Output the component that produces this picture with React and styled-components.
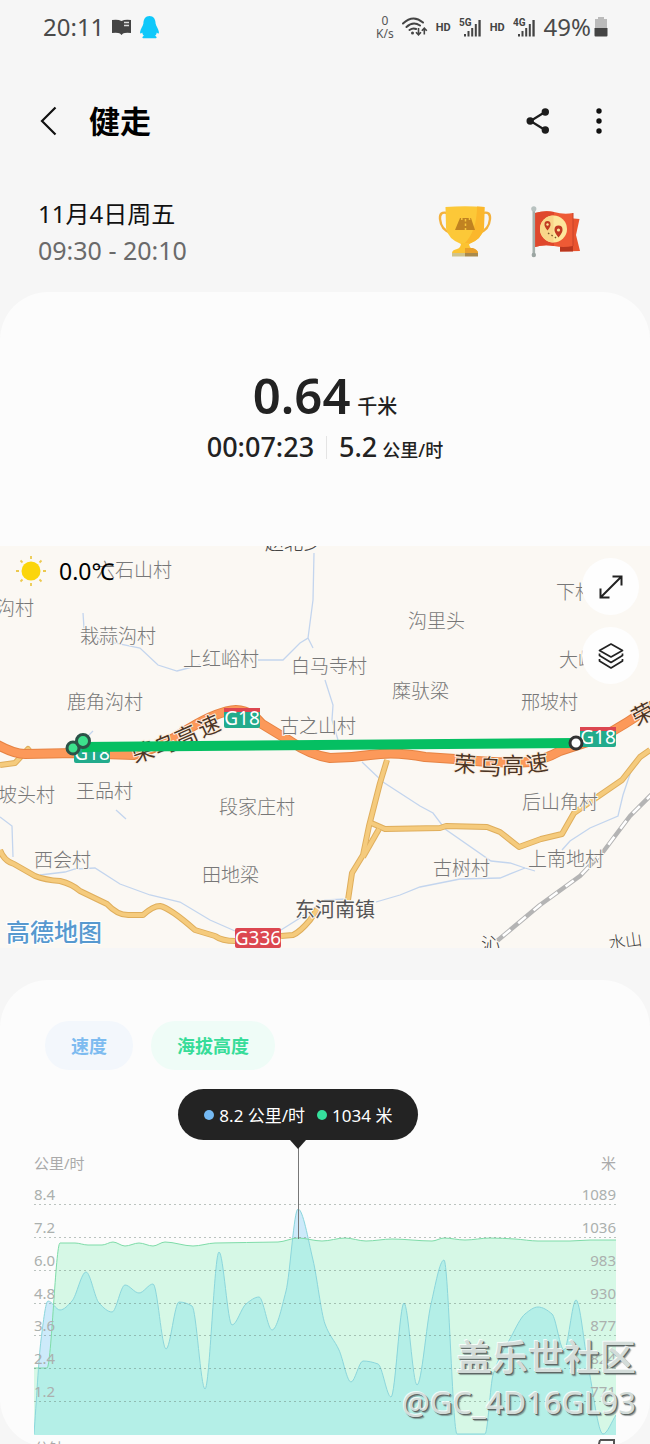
import React from "react";
import styled, { createGlobalStyle } from "styled-components";

const GlobalStyle = createGlobalStyle`
  * {
    box-sizing: border-box;
  }

  body {
    margin: 0;
    background: #f6f6f6;
    color: #222;
    font-family: "Noto Sans", "Noto Sans CJK SC", sans-serif;
  }

  button {
    padding: 0;
    border: none;
    background: none;
    color: inherit;
    font: inherit;
    cursor: pointer;
  }

  svg {
    display: block;
  }
`;

/* ---------- data ---------- */

const villages = [
  ["六石山村", 96, 577],
  ["沟村", -4, 615],
  ["栽蒜沟村", 80, 643],
  ["上红峪村", 183, 666],
  ["白马寺村", 291, 673],
  ["沟里头", 408, 628],
  ["下村", 556, 599],
  ["大峪", 559, 667],
  ["糜驮梁", 392, 698],
  ["邢坡村", 521, 709],
  ["鹿角沟村", 67, 709],
  ["古之山村", 280, 733],
  ["坡头村", -2, 802],
  ["王品村", 76, 798],
  ["段家庄村", 219, 814],
  ["后山角村", 522, 809],
  ["西会村", 34, 867],
  ["田地梁", 202, 882],
  ["古树村", 433, 875],
  ["上南地村", 528, 866],
];

const roadNames = [
  ["荣", 143, 752, -18],
  ["乌", 165, 745, -22],
  ["高", 186, 736, -24],
  ["速", 209, 726, -24],
  ["荣", 465, 764, 4],
  ["乌", 490, 767, 2],
  ["高", 513, 765, 0],
  ["速", 537, 763, -8],
  ["荣", 643, 714, -28],
];

const rivers = [
  "M314 553 313 600 308 638 300 643 283 660 258 660",
  "M308 638 313 648M325 680 333 705 332 720 338 740",
  "M83 613 84 628 100 640 140 648 158 665 177 671 200 665",
  "M0 817 12 826 13 857M40 875 65 872 75 869 95 868 120 884 150 895 180 902 210 920 235 931",
  "M116 810 126 819M84 740 93 731",
  "M362 762 383 782 420 806 433 813 445 829 491 861 510 863 525 868 535 871",
  "M376 902 400 895 420 887 460 879 500 878 525 868",
  "M281 930 300 918 325 900 348 899",
  "M562 850 570 841 590 828 618 816 623 795 632 768 645 755",
];

const yellowRoads = [
  "M0 850Q4 861 14 864L35 876Q45 880 60 881Q72 884 80 891L107 904Q118 916 130 915L143 915Q153 906 160 906Q170 908 195 930L215 936Q222 941 235 941",
  "M281 936 293 935Q300 932 310 920L318 908",
  "M387 760 380 783 369 826 363 855 352 873 348 900",
  "M369 822 385 829 440 828 446 826 487 827 500 832 519 847 541 839 562 834 574 813 590 802 622 780 640 757 650 750",
  "M379 829 363 857",
  "M0 765 15 763 28 749 32 754",
];

const highway =
  "M-4 744Q14 754 25 754L75 753 134 755Q160 748 190 728Q218 711 236 710Q250 710 262 724L290 741Q310 755 330 758Q350 758 370 755Q395 751 425 757L455 759Q500 764 530 762Q548 758 560 751L600 738Q630 722 654 704";

const railway = "M654 792 630 816 603 852 580 876 540 905 497 941";

const axis = [
  ["8.4", "1089"],
  ["7.2", "1036"],
  ["6.0", "983"],
  ["4.8", "930"],
  ["3.6", "877"],
  ["2.4", "824"],
  ["1.2", "771"],
];

const speed = [
  [34, 1434], [41, 1340], [48, 1301], [60, 1310], [72, 1301], [86, 1272],
  [99, 1303], [112, 1312], [125, 1285], [139, 1293], [153, 1284], [166, 1349],
  [179, 1302], [192, 1306], [205, 1389], [219, 1252], [232, 1325], [246, 1304],
  [259, 1297], [272, 1330], [286, 1291], [298, 1209], [313, 1260], [325, 1324],
  [339, 1350], [351, 1382], [363, 1361], [378, 1364], [391, 1397], [404, 1303],
  [417, 1385], [431, 1304], [444, 1260], [457, 1434], [485, 1434], [493, 1375],
  [511, 1337], [525, 1314], [538, 1307], [552, 1314], [564, 1350], [576, 1300],
  [588, 1365], [603, 1434], [616, 1415],
];

const altitude = [
  [34, 1368], [47, 1368], [60, 1243], [75, 1243], [88, 1245], [102, 1245],
  [113, 1242], [125, 1246], [139, 1243], [153, 1246], [165, 1242], [193, 1246],
  [215, 1243], [278, 1242], [298, 1238], [322, 1241], [345, 1238], [366, 1241],
  [392, 1239], [432, 1241], [444, 1238], [465, 1240], [490, 1238], [515, 1239],
  [538, 1241], [570, 1241], [590, 1240], [616, 1240],
];

// monotone cubic through the samples, so peaks never overshoot
const curve = (samples) => {
  const pts = samples.map(([x, y]) => [x - 34, y - 1172]);
  const slope = (a, b) => (b[1] - a[1]) / (b[0] - a[0]);
  const tangents = pts.map((p, i) => {
    if (i === 0) return slope(p, pts[1]);
    if (i === pts.length - 1) return slope(pts[i - 1], p);
    const l = slope(pts[i - 1], p);
    const r = slope(p, pts[i + 1]);
    return l * r <= 0 ? 0 : (2 * l * r) / (l + r);
  });
  return pts.reduce((d, [x, y], i) => {
    if (i === 0) return `M${x} ${y}`;
    const [px, py] = pts[i - 1];
    const h = (x - px) / 3;
    return `${d}C${px + h} ${py + tangents[i - 1] * h} ${x - h} ${
      y - tangents[i] * h
    } ${x} ${y}`;
  }, "");
};

const speedLine = curve(speed);
const altitudeLine = curve(altitude);

/* ---------- icons ---------- */

const BookIcon = () => (
  <svg width="19" height="16" viewBox="0 0 19 16">
    <path
      d="M0 1Q6 0 9.500 2Q13 0 19 1V14Q13 13.500 11 14.500L9.500 16L8 14.500Q6 13.500 0 14Z"
      fill="#444"
    />
    <path d="M12 3.500H17M12 6.500H17" stroke="#ddd" strokeWidth="1.300" />
  </svg>
);

const PenguinIcon = () => (
  <svg width="19" height="23" viewBox="0 0 19 23">
    <path
      d="M9.500 0C13.500 0 15.500 3 15.600 7.500C16 10 18.500 13 18.900 16C19 18 18 18 16.800 16.500C16.500 18 16 19 15 19.800C17 20.500 17 22 16 22.300H3C2 22 2 20.500 4 19.800C3 19 2.500 18 2.200 16.500C1 18 0 18 .1 16C.5 13 3 10 3.400 7.500C3.500 3 5.500 0 9.500 0Z"
      fill="#0fc8fa"
    />
  </svg>
);

const WifiIcon = () => (
  <svg width="26" height="20" viewBox="0 0 26 20" fill="none" stroke="#444">
    <path
      d="M1 6.500Q11 -3 21 5.500M4.500 10Q11 4 18 8.500M7.500 13Q11 10.500 14 12"
      strokeWidth="2"
      strokeLinecap="round"
    />
    <circle cx="10.500" cy="16" r="1.500" fill="#444" stroke="none" />
    <path
      d="M16.500 11V17.500M14 15.300L16.500 17.800L19 15.300M22.300 17.500V11.500M19.800 13.700L22.300 11.200L24.800 13.700"
      strokeWidth="1.600"
    />
  </svg>
);

const SignalIcon = ({ label }) => (
  <svg width="23" height="21" viewBox="0 0 23 21" fill="#444">
    <text x="0" y="9" fontFamily="Roboto" fontSize="10" fontWeight="700">
      {label}
    </text>
    <path d="M5 17h2v2.500h-2zM8.500 14h2v5.500h-2zM12.200 11h2v8.500h-2zM15.800 7h2v12.500h-2zM19.400 3h2.300v16.500h-2.300z" />
  </svg>
);

const BatteryIcon = () => (
  <svg width="14" height="20" viewBox="0 0 14 20">
    <path d="M4 0h6v2h3v10H1V2h3z" fill="#bbb" />
    <path d="M.5 11h13v7.500q0 1-1 1h-11q-1 0-1-1z" fill="#444" />
  </svg>
);

const BackIcon = () => (
  <svg width="17" height="30" viewBox="0 0 17 30" fill="none" stroke="#111">
    <path d="M15.500 1.500L2 15L15.500 28.500" strokeWidth="2.200" />
  </svg>
);

const ShareIcon = () => (
  <svg width="24" height="28" viewBox="0 0 24 28" fill="#1c1c1c">
    <path d="M19 5L4.500 14L19 23" fill="none" stroke="#1c1c1c" strokeWidth="2.200" />
    <circle cx="19.300" cy="5" r="3.700" />
    <circle cx="4.200" cy="14" r="3.700" />
    <circle cx="19.300" cy="23" r="3.700" />
  </svg>
);

const MoreIcon = () => (
  <svg width="8" height="28" viewBox="0 0 8 28" fill="#111">
    <circle cx="4" cy="4" r="2.700" />
    <circle cx="4" cy="14" r="2.700" />
    <circle cx="4" cy="24" r="2.700" />
  </svg>
);

const TrophyIcon = () => (
  <svg width="54" height="52" viewBox="0 0 54 52">
    <g fill="none" stroke="#f3b13c" strokeWidth="2.400">
      <path d="M9 7Q1.500 5 2 13Q3 24 13 27" />
      <path d="M45 7Q52.500 5 52 13Q51 24 41 27" />
    </g>
    <path d="M7.500 1Q27 -.5 46.500 1L46 22Q44 33 31 38H23Q10 33 8 22Z" fill="#fcc838" />
    <path d="M46.500 1L46 22Q44 33 31 38H26Q39 25 39 .4Z" fill="#fbb72c" />
    <path d="M23 37H31Q31 42 35 43Q40 44 40 47H14Q14 44 19 43Q23 42 23 37Z" fill="#fcc331" />
    <path d="M27 42H35Q40 44 40 47H27Z" fill="#e9a02a" />
    <path d="M14 47H27V50.500H14Z" fill="#cfc38b" />
    <path d="M27 47H40V50.500H27Z" fill="#a98a4c" />
    <path d="M22 12H33L37 24H17Z" fill="#c08221" />
    <path
      d="M27.500 13V15.500M27.500 17.500V20M27.500 22V24M23.800 12V14M31.500 12V14"
      stroke="#f8c63a"
      strokeWidth="1.500"
    />
  </svg>
);

const FlagIcon = () => (
  <svg width="52" height="52" viewBox="0 0 52 52">
    <path d="M38 12L49.500 13L46 29L50 45L30 45.500Z" fill="#e9542f" />
    <path d="M30 40H43V45.500H30Z" fill="#b9371f" />
    <path d="M5 7Q15 4 24 6Q34 9 43 7V40Q33 42 24 40Q14 38 5 41Z" fill="#ee5a35" />
    <path d="M5 7Q15 4 24 6V40Q14 38 5 41Z" fill="#df472c" />
    <path d="M43 7V40" stroke="#c8432a" />
    <rect x="2.500" y="3" width="2.600" height="47" fill="#a5b0ac" />
    <circle cx="3.800" cy="2.800" r="2.600" fill="#b8c2c0" />
    <circle cx="3.800" cy="49" r="2.200" fill="#9ba5a2" />
    <circle cx="23.500" cy="23" r="13.500" fill="#fde79c" />
    <path d="M23.500 9.500A13.500 13.500 0 0 0 23.500 36.500Z" fill="#f9d68a" />
    <path
      d="M17.500 24.500Q14 20 14.500 18A3 3 0 0 1 20.500 18Q21 20 17.500 24.500ZM28.500 31.500Q24 26 24.500 23.500A4 4 0 0 1 32.500 23.500Q33 26 28.500 31.500Z"
      fill="#c13a22"
    />
    <circle cx="17.500" cy="18.500" r="1.200" fill="#fde79c" />
    <circle cx="28.500" cy="24" r="1.600" fill="#fde79c" />
    <path d="M18 27L27 32.500" stroke="#7a5a2c" strokeWidth="1.400" strokeDasharray="1.500 2.500" />
  </svg>
);

const SunIcon = () => (
  <svg width="30" height="30" viewBox="0 0 30 30">
    <circle cx="15" cy="15" r="9.500" fill="#fbd50b" />
    <path
      d="M15 0V3M15 27V30M0 15H3M27 15H30M4.500 4.500L6.500 6.500M23.500 23.500L25.500 25.500M4.500 25.500L6.500 23.500M23.500 6.500L25.500 4.500"
      stroke="#ecc94f"
      strokeWidth="1.800"
    />
  </svg>
);

const ExpandIcon = () => (
  <svg width="24" height="24" viewBox="0 0 24 24" fill="none" stroke="#222" strokeWidth="2">
    <path d="M2 22L22 2M13.500 1.500H22.500V10.500M1.500 13.500V22.500H10.500" />
  </svg>
);

const LayersIcon = () => (
  <svg width="26" height="26" viewBox="0 0 26 26" fill="none" stroke="#222" strokeWidth="1.700" strokeLinejoin="round">
    <path d="M13 1L24.500 7.500L13 14L1.500 7.500Z" />
    <path d="M1.500 10.500V12.500L13 19.500L24.500 12.500V10.500" />
    <path d="M1.500 16V18L13 25L24.500 18V16" />
  </svg>
);

/* ---------- map ---------- */

const Shield = ({ x, y, width = 36, red, children }) => (
  <g>
    <rect x={x} y={y} width={width} height="20" rx="2" fill={red ? "#dc4750" : "#22ab8c"} />
    {!red && <rect x={x} y={y} width={width} height="4" fill="#dc4750" />}
    <text
      x={x + width / 2}
      y={y + 17}
      fontSize="19"
      fill="#fff"
      textAnchor="middle"
    >
      {children}
    </text>
  </g>
);

const RouteMap = () => (
  <MapCanvas viewBox="0 546 650 402" preserveAspectRatio="xMidYMid slice" role="img" aria-label="路线地图">
    <rect y="546" width="650" height="402" fill="#fbf8f3" />
    <g fill="none" stroke="#c3d5ee" strokeWidth="1.300">
      {rivers.map((d) => (
        <path key={d} d={d} />
      ))}
    </g>
    <g fill="none" strokeLinejoin="round">
      <path d={railway} stroke="#b4b4b4" strokeWidth="4.500" />
      <path d={railway} stroke="#fff" strokeWidth="2.500" strokeDasharray="10 10" />
      {yellowRoads.map((d) => (
        <path key={d} d={d} stroke="#dfae5c" strokeWidth="6" />
      ))}
      {yellowRoads.map((d) => (
        <path key={d} d={d} stroke="#f5cb7d" strokeWidth="4" />
      ))}
      <path d={highway} stroke="#e68343" strokeWidth="10" />
      <path d={highway} stroke="#fc995a" strokeWidth="8" />
    </g>
    <g fontSize="19" fontWeight="300" fill="#777" stroke="#fbf8f3" strokeWidth="2" paintOrder="stroke">
      {villages.map(([name, x, y]) => (
        <text key={name} x={x} y={y}>
          {name}
        </text>
      ))}
      <text x="265" y="550" fill="#444">赵北乡</text>
      <text x="295" y="917" fontSize="20" fontWeight="400" fill="#555">东河南镇</text>
      <text x="481" y="952" fill="#333">沁</text>
      <text x="608" y="948" fontSize="17" fill="#444" transform="rotate(-8 620 940)">水山</text>
    </g>
    <g fontSize="22" fill="#4d3524" stroke="#fbeee0" strokeWidth="2" paintOrder="stroke" textAnchor="middle">
      {roadNames.map(([name, x, y, angle]) => (
        <text key={x} x={x} y={y + 8} transform={`rotate(${angle} ${x} ${y})`}>
          {name}
        </text>
      ))}
    </g>
    <Shield x={224} y={708}>G18</Shield>
    <Shield x={74} y={743}>G18</Shield>
    <Shield x={580} y={727}>G18</Shield>
    <Shield x={235} y={928} width={46} red>G336</Shield>
    <path d="M82 747L576 743" stroke="#05bf62" strokeWidth="10" />
    <g strokeWidth="3">
      <circle cx="73" cy="748" r="6" fill="#3de08c" stroke="#2c5247" />
      <circle cx="83" cy="741" r="6.500" fill="#3de08c" stroke="#2c5247" />
      <circle cx="576" cy="743" r="6" fill="#fff" stroke="#333" />
    </g>
    <text x="6" y="941" fontSize="24" fontWeight="500" fill="#5799cf" stroke="#fff" strokeWidth="2" paintOrder="stroke">
      高德地图
    </text>
  </MapCanvas>
);

/* ---------- page ---------- */

const App = () => (
  <Page>
    <GlobalStyle />
    <StatusBar>
      <StatusText>20:11</StatusText>
      <StatusIcons>
        <BookIcon />
        <PenguinIcon />
      </StatusIcons>
      <NetSpeed>
        <span>0</span>
        <span>K/s</span>
      </NetSpeed>
      <WifiIcon />
      <HdMark>HD</HdMark>
      <SignalIcon label="5G" />
      <HdMark>HD</HdMark>
      <SignalIcon label="4G" />
      <Battery>
        <StatusText>49%</StatusText>
        <BatteryIcon />
      </Battery>
    </StatusBar>

    <Header>
      <IconButton aria-label="返回">
        <BackIcon />
      </IconButton>
      <Title>健走</Title>
      <IconButton aria-label="分享">
        <ShareIcon />
      </IconButton>
      <IconButton aria-label="更多">
        <MoreIcon />
      </IconButton>
    </Header>

    <Session>
      <SessionTime>
        <DateLine>11月4日周五</DateLine>
        <TimeLine>09:30 - 20:10</TimeLine>
      </SessionTime>
      <TrophyIcon />
      <FlagIcon />
    </Session>

    <Summary>
      <Distance>
        0.64 <small>千米</small>
      </Distance>
      <Stats>
        <span>00:07:23</span>
        <Divider />
        <span>
          5.2 <small>公里/时</small>
        </span>
      </Stats>
    </Summary>

    <MapPanel>
      <RouteMap />
      <Weather>
        <SunIcon />
        <span>0.0℃</span>
      </Weather>
      <MapTools>
        <RoundButton aria-label="全屏">
          <ExpandIcon />
        </RoundButton>
        <RoundButton aria-label="图层">
          <LayersIcon />
        </RoundButton>
      </MapTools>
    </MapPanel>

    <ChartCard>
      <Chips>
        <Chip color="#7dbbf0" $bg="#f3f7fc">速度</Chip>
        <Chip color="#37dc99" $bg="#effcf7">海拔高度</Chip>
      </Chips>
      <AxisTitles>
        <span>公里/时</span>
        <span>米</span>
      </AxisTitles>
      <Plot>
        <PlotArea viewBox="0 0 582 263" preserveAspectRatio="none">
          <clipPath id="below-altitude">
            <path d={`${altitudeLine}V263H0Z`} />
          </clipPath>
          <path d={`${speedLine}V263H0Z`} fill="#cdeafa" />
          <path d={`${altitudeLine}V263H0Z`} fill="#d6f8e6" />
          <path d={`${speedLine}V263H0Z`} fill="#b4efe7" clipPath="url(#below-altitude)" />
          <path d={speedLine} fill="none" stroke="#8bd6dc" />
          <path d={altitudeLine} fill="none" stroke="#7fdca9" />
        </PlotArea>
        {axis.map(([left, right]) => (
          <AxisRow key={left}>
            <span>{left}</span>
            <span>{right}</span>
          </AxisRow>
        ))}
        <AxisBase />
        <Marker>
          <Bubble>
            <Dot color="#74b9f3" />
            8.2 公里/时
            <Dot color="#35e09c" $gap />
            1034 米
          </Bubble>
        </Marker>
      </Plot>
      <ChartFoot>
        <span>分钟</span>
        <svg width="20" height="12" viewBox="0 0 20 12" fill="none" stroke="#555" strokeWidth="2">
          <path d="M4 1H18V9M9 6H14M4 1L2 9" />
        </svg>
      </ChartFoot>
    </ChartCard>

    <Watermark>
      <strong>盖乐世社区</strong>
      <span>@GC_4D16GL93</span>
    </Watermark>
  </Page>
);

const Page = styled.main`
  position: relative;
  height: 100vh;
  min-height: 600px;
  overflow: hidden;
`;

const StatusBar = styled.div`
  display: flex;
  align-items: center;
  gap: 8px;
  height: 54px;
  padding: 0 42px 0 43px;
`;

const StatusText = styled.span`
  color: #4a4a4a;
  font-size: 24px;
  line-height: 24px;
`;

const StatusIcons = styled.div`
  display: flex;
  flex: 1;
  align-items: center;
  gap: 9px;
`;

const NetSpeed = styled.div`
  display: flex;
  flex-direction: column;
  align-items: center;
  color: #555;
  font-size: 12px;
  line-height: 13px;
`;

const HdMark = styled.span`
  color: #444;
  font-family: Roboto, sans-serif;
  font-size: 11px;
  font-weight: 700;
`;

const Battery = styled.div`
  display: flex;
  align-items: center;
  gap: 3px;
`;

const Header = styled.header`
  display: flex;
  align-items: center;
  height: 134px;
  padding: 0 47px 0 40px;
`;

const IconButton = styled.button`
  display: flex;
  align-items: center;

  & + & {
    margin-left: 45px;
  }
`;

const Title = styled.h1`
  flex: 1;
  margin: 0 0 0 32px;
  color: #000;
  font-size: 31px;
  font-weight: 700;
  line-height: 40px;
`;

const Session = styled.section`
  display: flex;
  align-items: center;
  gap: 38px;
  height: 104px;
  padding: 0 68px 16px 38px;
`;

const SessionTime = styled.div`
  flex: 1;
`;

const DateLine = styled.div`
  color: #111;
  font-size: 24px;
  line-height: 36px;
`;

const TimeLine = styled.div`
  color: #6a6a6a;
  font-size: 25px;
  line-height: 36px;
`;

const Summary = styled.section`
  height: 254px;
  padding-top: 70px;
  border-radius: 48px 48px 0 0;
  background: #fcfcfc;
  text-align: center;
`;

const Distance = styled.div`
  font-size: 49px;
  font-weight: 600;
  line-height: 66px;

  small {
    margin-left: -6px;
    font-size: 20px;
    font-weight: 500;
    line-height: 1;
  }
`;

const Stats = styled.div`
  display: flex;
  align-items: center;
  justify-content: center;
  font-size: 27px;
  font-weight: 500;
  line-height: 38px;

  small {
    margin-left: -2px;
    font-size: 18px;
    line-height: 1;
  }
`;

const Divider = styled.i`
  width: 1px;
  height: 23px;
  margin: 0 12px;
  background: #e4e4e4;
`;

const MapPanel = styled.section`
  position: relative;
`;

const MapCanvas = styled.svg`
  width: 100%;
  height: 402px;
`;

const Weather = styled.div`
  position: absolute;
  top: 10px;
  left: 16px;
  display: flex;
  align-items: center;
  gap: 13px;
  color: #000;
  font-size: 23px;
  line-height: 30px;
`;

const MapTools = styled.div`
  position: absolute;
  top: 12px;
  right: 11px;
  display: grid;
  gap: 12px;
`;

const RoundButton = styled.button`
  display: grid;
  place-items: center;
  width: 57px;
  height: 57px;
  border-radius: 50%;
  background: #fefefe;
`;

const ChartCard = styled.section`
  margin-top: 32px;
  padding: 41px 34px 0;
  border-radius: 48px;
  background: #fcfcfc;
`;

const Chips = styled.div`
  display: flex;
  gap: 18px;
  padding-left: 11px;
`;

const Chip = styled.button`
  height: 49px;
  padding: 0 26px 2px;
  border-radius: 24px;
  background: ${({ $bg }) => $bg};
  color: ${({ color }) => color};
  font-size: 18px;
  font-weight: 700;
`;

const AxisTitles = styled.div`
  display: flex;
  justify-content: space-between;
  margin-top: 84px;
  color: #aaa;
  font-size: 15px;
  line-height: 18px;
`;

const Plot = styled.div`
  position: relative;
  display: grid;
  grid-template-rows: repeat(8, 1fr);
  height: 263px;
`;

const PlotArea = styled.svg`
  position: absolute;
  inset: 0;
  width: 100%;
  height: 100%;
`;

const AxisRow = styled.div`
  position: relative;
  display: flex;
  align-items: flex-end;
  justify-content: space-between;
  padding-bottom: 2px;
  color: #abb0ae;
  font-size: 15px;
  line-height: 18px;

  &::after {
    content: "";
    position: absolute;
    right: 0;
    bottom: 0;
    left: 0;
    height: 1px;
    background: repeating-linear-gradient(
      90deg,
      rgba(90, 110, 100, 0.4) 0 2px,
      transparent 2px 5px
    );
  }
`;

const AxisBase = styled.div`
  border-bottom: 1px solid #b9cfca;
`;

const Marker = styled.div`
  position: absolute;
  top: -32px;
  bottom: 196px;
  left: 45%;
  display: flex;
  justify-content: center;
  width: 5px;

  &::before {
    content: "";
    width: 1px;
    background: #777;
  }
`;

const Bubble = styled.div`
  position: absolute;
  bottom: 100%;
  display: flex;
  align-items: center;
  height: 51px;
  padding: 0 26px;
  border-radius: 26px;
  background: #232323;
  color: #fff;
  font-size: 17px;
  white-space: nowrap;

  &::after {
    content: "";
    position: absolute;
    top: 100%;
    left: calc(50% - 8px);
    border: 8px solid transparent;
    border-top: 9px solid #232323;
    border-bottom: none;
  }
`;

const Dot = styled.i`
  width: 10px;
  height: 10px;
  margin: 0 5px 0 ${({ $gap }) => ($gap ? "12px" : "0")};
  border-radius: 50%;
  background: ${({ color }) => color};
`;

const ChartFoot = styled.div`
  display: flex;
  justify-content: space-between;
  height: 12px;
  padding-top: 4px;
  overflow: hidden;
  color: #aaa;
  font-size: 15px;
  line-height: 18px;
`;

const Watermark = styled.div`
  position: absolute;
  right: 14px;
  bottom: 19px;
  display: flex;
  flex-direction: column;
  align-items: flex-end;
  color: #d3dcd9;
  font-size: 31px;
  line-height: 45px;
  text-shadow: -1px -1px 0 rgba(255, 255, 255, 0.8), 1px 1px 0 #5d6664,
    2px 2px 1px rgba(93, 102, 100, 0.6);
  pointer-events: none;

  strong {
    font-size: 36px;
    font-weight: 500;
  }
`;

export default App;
